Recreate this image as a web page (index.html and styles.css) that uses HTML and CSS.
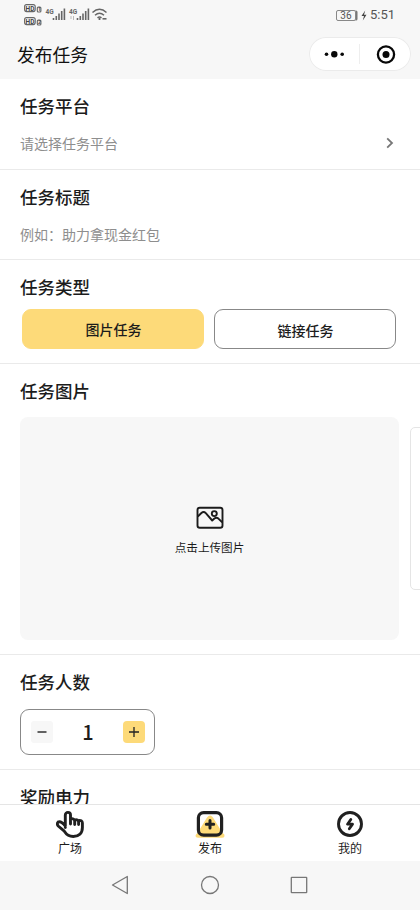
FILE: index.html
```html
<!DOCTYPE html>
<html lang="zh-CN">
<head>
<meta charset="utf-8">
<meta name="viewport" content="width=device-width, initial-scale=1">
<title>发布任务</title>
<link rel="stylesheet" href="styles.css">
</head>
<body>
<div class="phone">
  <div class="status">
    <svg class="signals" width="88" height="30" viewBox="0 0 88 30" fill="none" stroke="#666">
      <g stroke-width="1.100">
        <rect x=".6" y="4.600" width="10.600" height="7" rx="2"/><rect x=".6" y="17.600" width="10.600" height="7" rx="2"/>
        <rect x="13.300" y="7" width="3.600" height="5" rx="1"/><rect x="13.300" y="20" width="3.600" height="5" rx="1"/>
      </g>
      <g class="badge-text">
        <text x="1.600" y="10.600">HD</text><text x="1.600" y="23.600">HD</text>
        <text class="tiny" x="14" y="11.300">1</text><text class="tiny" x="14" y="24.300">2</text>
      </g>
      <text class="net" x="21.500" y="13.500">4G</text><text class="net" x="45" y="13.500">4G</text>
      <path stroke-width="1.600" d="M29.500 20v-2M32.300 20v-4M35 20v-6.500M37.700 20v-9M40.400 20V8.500M53.500 20v-2M56.300 20v-4M59 20v-6.500M61.700 20v-9M64.400 20V8.500"/>
      <path stroke="#bbb" d="M47 16v3M49.500 16v4"/>
      <path stroke-width="1.500" d="M68.500 12.500q7-6.500 14 0M71 15.200q4.500-4 9 0M73.500 17.800q2-1.600 4 0"/>
      <circle cx="75.500" cy="19" r="1.100" fill="#555" stroke="none"/><path stroke-width="1.600" d="M78.500 18.800h4"/>
    </svg>
    <div class="status-right">
      <span class="battery">36</span>
      <svg width="6" height="11" viewBox="0 0 6 11"><path fill="#444" d="M4.200.5.500 6H3L1.800 10.500 5.500 4.700H3z"/></svg>
      <span class="clock">5:51</span>
    </div>
  </div>
  <header class="header">
    <h1>发布任务</h1>
    <div class="capsule">
      <svg width="102" height="34" viewBox="0 0 102 34">
        <g fill="#080808"><circle cx="17.500" cy="17.300" r="1.800"/><circle cx="25.300" cy="17.300" r="3.200"/><circle cx="33.200" cy="17.300" r="1.800"/><circle cx="77" cy="17.500" r="3.500"/></g>
        <path stroke="#eee" d="M50.500 7v20"/>
        <circle cx="77" cy="17.500" r="8.100" fill="none" stroke="#080808" stroke-width="2.300"/>
      </svg>
    </div>
  </header>
  <main class="form">
    <section class="field platform">
      <h2>任务平台</h2>
      <div class="line"><span>请选择任务平台</span>
        <svg width="8" height="12" viewBox="0 0 8 12"><path d="M1.200 1.300 6 6 1.200 10.700" fill="none" stroke="#777" stroke-width="1.800"/></svg>
      </div>
    </section>
    <section class="field title">
      <h2>任务标题</h2>
      <div class="line"><span>例如：助力拿现金红包</span></div>
    </section>
    <section class="field type">
      <h2>任务类型</h2>
      <div class="choices"><button class="choice active">图片任务</button><button class="choice">链接任务</button></div>
    </section>
    <section class="field picture">
      <h2>任务图片</h2>
      <div class="upload">
        <svg width="28" height="24" viewBox="0 0 28 24" fill="none" stroke="#1c1c1c" stroke-width="1.900" stroke-linejoin="round">
          <rect x="1.500" y="1.800" width="25" height="20" rx="2.300"/>
          <path d="M1.800 10.500 5.400 7q2.300-2 4.400.2l6.400 7.300 2.200-2q2-1.500 4 .1l3.800 3.600"/><circle cx="18.300" cy="7.600" r="2.500"/>
        </svg>
        <span>点击上传图片</span>
      </div>
      <div class="drawer"></div>
    </section>
    <section class="field people">
      <h2>任务人数</h2>
      <div class="stepper">
        <button class="step"><svg width="12" height="12"><path d="M1.500 6h9" stroke="#222" stroke-width="1.400"/></svg></button>
        <span>1</span>
        <button class="step plus"><svg width="12" height="12"><path d="M1 6h10M6 1v10" stroke="#222" stroke-width="1.300"/></svg></button>
      </div>
    </section>
    <section class="field reward"><h2>奖励电力</h2></section>
  </main>
  <nav class="tabs">
    <a class="tab">
      <svg width="30" height="30" viewBox="0 0 30 30" fill="none" stroke="#202020" stroke-width="2.900" stroke-linecap="round" stroke-linejoin="round">
        <path d="M10.300 17.500V5a2.600 2.600 0 0 1 5.200 0v9M15.500 9.200c2-1.200 4.200 0 4.200 2V14.500M19.700 10c2-.8 3.900.3 3.900 2.200V14.500M23.600 10.600c1.900-.7 3.800.4 3.800 2.300V17.500c0 5.700-3.700 9-9.100 9-4.300 0-6.800-1.800-9-5.300L3.200 16c-1.600-2-.9-4.300 1.200-4.300 2 0 3.900 1.700 5.900 4.300"/>
      </svg><span>广场</span>
    </a>
    <a class="tab">
      <svg width="30" height="30" viewBox="0 0 30 30">
        <path fill="#fdda79" d="M2.500 23 12 7.500q3-4 6 0L27.500 23q2.500 1 2 3.200-.5 1.500-2.500 1.500H3Q.5 27.700.5 26T2.500 23z"/>
        <rect x="3.400" y="2.600" width="23.200" height="22.600" rx="5.200" fill="none" stroke="#202020" stroke-width="3.200"/>
        <path d="M15 10.500v7.400M11.300 14.200h7.400" stroke="#202020" stroke-width="3" stroke-linecap="round"/>
      </svg><span>发布</span>
    </a>
    <a class="tab">
      <svg width="30" height="30" viewBox="0 0 30 30" fill="none" stroke="#202020" stroke-linejoin="round" stroke-linecap="round">
        <circle cx="15" cy="14" r="11.500" stroke-width="2.900"/><path d="m15.800 9.500-3.300 4.700h5L14.300 18.800" stroke-width="2.800"/>
      </svg><span>我的</span>
    </a>
  </nav>
  <div class="system">
    <svg width="18" height="20" viewBox="0 0 18 20"><path d="M16.300 1.500v17L1.500 10z"/></svg>
    <svg width="20" height="20" viewBox="0 0 20 20"><circle cx="10" cy="10" r="8.500"/></svg>
    <svg width="18" height="20" viewBox="0 0 18 20"><rect x="1.300" y="2.300" width="15.400" height="15.400" rx=".5"/></svg>
  </div>
</div>
</body>
</html>
```
FILE: styles.css
```css
* { box-sizing: border-box; }
body { margin: 0; background: #fff; color: #1c1c1c; font-family: "Noto Sans CJK SC", sans-serif; }
h1, h2 { margin: 0; }
svg { display: block; flex: none; }
button { font: inherit; color: inherit; padding: 0; margin: 0; border: 0; }
.phone { width: 420px; height: 910px; display: flex; flex-direction: column; overflow: hidden; }

.status { height: 30px; flex: none; background: #f7f7f7; display: flex; justify-content: space-between; padding: 0 25px 0 24px; }
.badge-text { font: bold 6.5px Roboto, sans-serif; fill: #444; stroke: none; }
.badge-text .tiny { font-size: 5px; }
.net { font: bold 6.5px Roboto, sans-serif; fill: #666; stroke: none; }
.status-right { display: flex; align-items: center; color: #555; font-family: Roboto, sans-serif; }
.battery { width: 20px; height: 11px; border: 1px solid #888; border-radius: 2px; font-size: 10px; line-height: 10px; text-align: center; margin-right: 5px; box-shadow: 2px 0 0 -0.5px #777; }
.clock { font-size: 13px; line-height: 16px; margin-left: 3px; }

.header { height: 49px; flex: none; background: #f7f7f7; display: flex; justify-content: space-between; padding: 7px 9px 0 17px; }
.header h1 { font-size: 17.800px; font-weight: 400; line-height: 35px; color: #111; }
.capsule { width: 102px; height: 34px; border-radius: 17px; background: #fff; box-shadow: inset 0 0 0 1px #ebebeb; }

.form { flex: 1; min-height: 0; overflow: hidden; }
.field { border-bottom: 1px solid #eaeaea; padding: 14px 20px 0; }
.field h2 { font-size: 17.500px; line-height: 26px; font-weight: 500; }
.platform { height: 91px; }
.title { height: 90px; }
.type { height: 104px; }
.picture { height: 291px; position: relative; }
.people { height: 115px; }
.reward { border: 0; }
.line { height: 20px; margin-top: 14px; display: flex; justify-content: space-between; align-items: center; padding-right: 6px; font-size: 14px; line-height: 20px; color: #8e8e8e; }
.choices { display: flex; gap: 10px; padding: 0 4px 0 2px; margin-top: 9px; }
.choice { width: 182px; height: 40px; border-radius: 9px; border: 1px solid #888; background: #fff; font-size: 14px; font-weight: 500; padding: 1px 0 0 1px; }
.choice.active { background: #fdda79; border-color: #fdda79; padding-top: 0; }
.upload { width: 379px; height: 223px; border-radius: 8px; background: #f7f7f7; margin-top: 13px; display: flex; flex-direction: column; align-items: center; padding-top: 89px; gap: 8px; font-size: 11.600px; line-height: 18px; }
.drawer { position: absolute; left: 410px; top: 63px; width: 20px; height: 163px; border: 1px solid #e5e5e5; border-radius: 5px; background: #fff; }
.stepper { width: 135px; height: 46px; margin-top: 14px; border: 1px solid #888; border-radius: 9px; display: flex; align-items: center; justify-content: space-between; padding: 0 9px 0 10px; }
.stepper span { font-size: 20px; font-weight: 500; line-height: 28px; }
.step { width: 22px; height: 22px; border-radius: 3px; background: #f7f7f7; display: grid; place-items: center; }
.step.plus { background: #fdda79; border-radius: 4px; }

.tabs { height: 57px; flex: none; border-top: 1px solid #e5e5e5; background: #fff; display: grid; grid-template-columns: repeat(3, 1fr); }
.tab { display: flex; flex-direction: column; align-items: center; padding-top: 5px; font-size: 12px; line-height: 15px; }
.system { height: 49px; flex: none; background: #f7f7f7; display: flex; justify-content: space-between; padding: 14px 112px 0 111px; }
.system svg { fill: none; stroke: #777; stroke-width: 1.300; stroke-linejoin: round; }
```
